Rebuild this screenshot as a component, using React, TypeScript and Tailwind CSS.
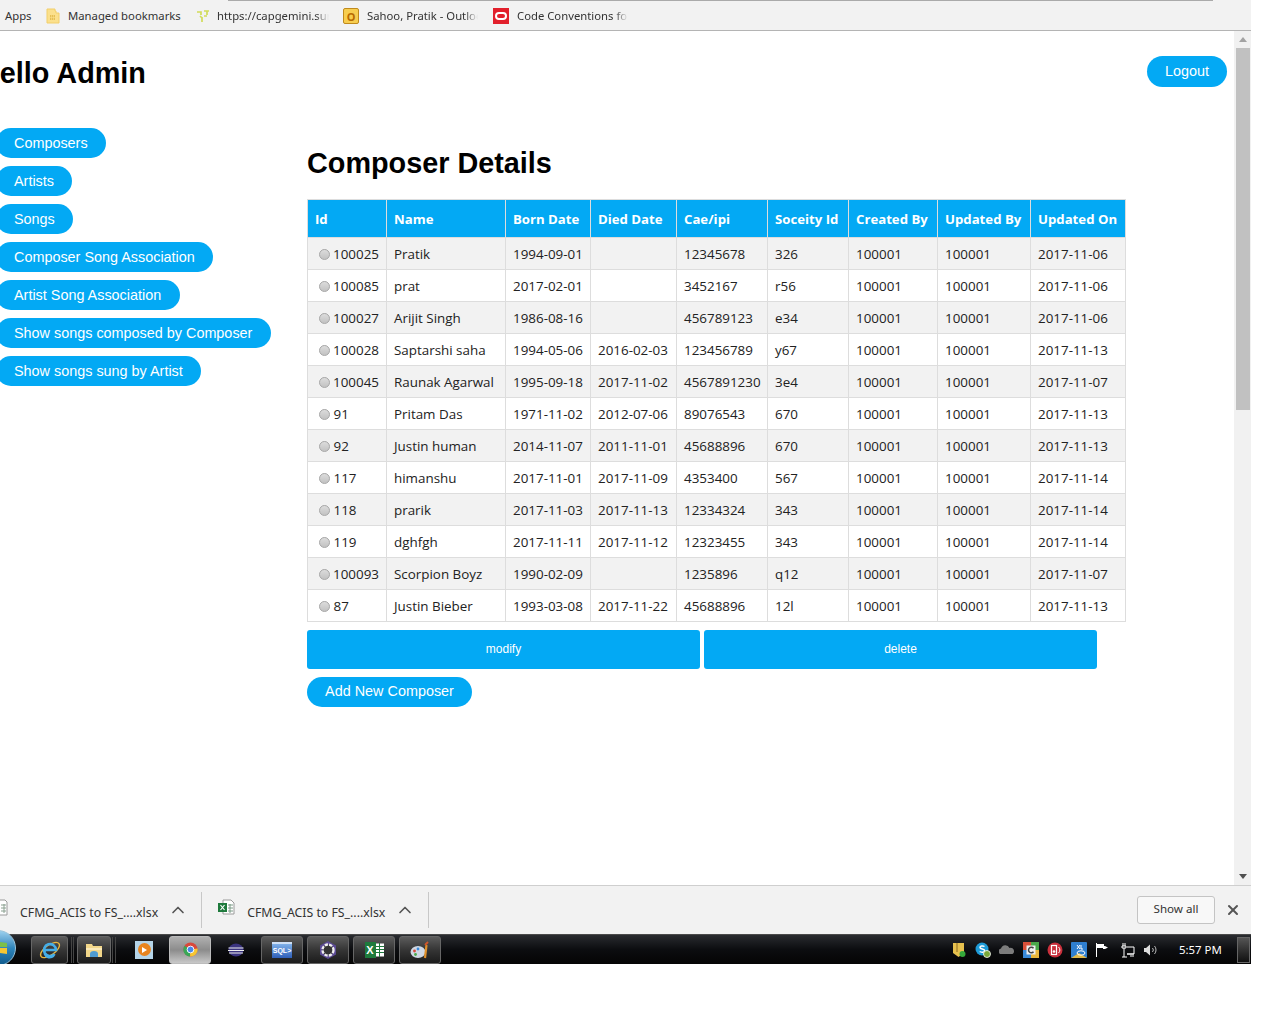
import type { ReactNode } from "react";
import { ChevronUp, X } from "lucide-react";

const composers = [
  ["100025", "Pratik", "1994-09-01", "", "12345678", "326", "100001", "100001", "2017-11-06"],
  ["100085", "prat", "2017-02-01", "", "3452167", "r56", "100001", "100001", "2017-11-06"],
  ["100027", "Arijit Singh", "1986-08-16", "", "456789123", "e34", "100001", "100001", "2017-11-06"],
  ["100028", "Saptarshi saha", "1994-05-06", "2016-02-03", "123456789", "y67", "100001", "100001", "2017-11-13"],
  ["100045", "Raunak Agarwal", "1995-09-18", "2017-11-02", "4567891230", "3e4", "100001", "100001", "2017-11-07"],
  ["91", "Pritam Das", "1971-11-02", "2012-07-06", "89076543", "670", "100001", "100001", "2017-11-13"],
  ["92", "Justin human", "2014-11-07", "2011-11-01", "45688896", "670", "100001", "100001", "2017-11-13"],
  ["117", "himanshu", "2017-11-01", "2017-11-09", "4353400", "567", "100001", "100001", "2017-11-14"],
  ["118", "prarik", "2017-11-03", "2017-11-13", "12334324", "343", "100001", "100001", "2017-11-14"],
  ["119", "dghfgh", "2017-11-11", "2017-11-12", "12323455", "343", "100001", "100001", "2017-11-14"],
  ["100093", "Scorpion Boyz", "1990-02-09", "", "1235896", "q12", "100001", "100001", "2017-11-07"],
  ["87", "Justin Bieber", "1993-03-08", "2017-11-22", "45688896", "12l", "100001", "100001", "2017-11-13"],
];

const headers = ["Id", "Name", "Born Date", "Died Date", "Cae/ipi", "Soceity Id", "Created By", "Updated By", "Updated On"];

const colWidths = ["w-[79px]", "w-[119px]", "w-[85px]", "w-[86px]", "w-[91px]", "w-[81px]", "w-[89px]", "w-[93px]", "w-[95px]"];

const navItems = [
  "Composers",
  "Artists",
  "Songs",
  "Composer Song Association",
  "Artist Song Association",
  "Show songs composed by Composer",
  "Show songs sung by Artist",
];

function ExcelIcon() {
  return (
    <svg width="17" height="17" viewBox="0 0 17 17">
      <path d="M5 1h8l3 3v11H5z" fill="#fff" stroke="#9a9a9a" />
      <path d="M10 6h5M10 9h5M10 12h5M12 5v9" stroke="#7a9a86" fill="none" />
      <rect x="0" y="4" width="9" height="9" fill="#1e7a3c" />
      <path d="M2.5 6l4 5M6.500 6l-4 5" stroke="#fff" strokeWidth="1.2" />
    </svg>
  );
}

function DownloadItem() {
  return (
    <>
      <span className="text-[12.3px] pt-[6px] text-[#333] whitespace-nowrap">CFMG_ACIS to FS_....xlsx</span>
      <ChevronUp className="w-5 h-5 ml-[10px] shrink-0 text-[#555]" />
      <span className="w-px h-9 ml-[13px] bg-[#c8c8c8] shrink-0" />
    </>
  );
}

function TaskButton({ children, className, active }: { children: ReactNode; className: string; active?: boolean }) {
  return (
    <div
      className={`h-[28px] rounded-[3px] border flex items-center justify-center shrink-0 ${className} ${
        active ? "border-[#bbb] bg-gradient-to-b from-[#b0b0b0] via-[#8c8c8c] to-[#c8c8c8]" : "border-[#666] bg-gradient-to-b from-[#5c5c5c] via-[#353535] to-[#1c1c1c]"
      }`}
    >
      {children}
    </div>
  );
}

function Bookmark({ label, width }: { label: string; width: string }) {
  return (
    <span className={`${width} shrink-0 overflow-hidden [mask-image:linear-gradient(to_right,black_88%,transparent)]`}>{label}</span>
  );
}

export default function App() {
  return (
    <div className="w-[1251px] font-['Liberation_Sans',sans-serif] bg-white overflow-hidden">
      {/* Bookmarks bar */}
      <div className="relative h-[31px] bg-[#f2f2f2] border-b border-[#b4b4b4] flex items-center pt-[2px] text-[11.3px] text-[#333] whitespace-nowrap font-['Noto_Sans',sans-serif] pl-[5px]">
        <div className="absolute top-0 left-[228px] w-[985px] h-px bg-[#aaa]" />
        <span className="w-[41px] shrink-0">Apps</span>
        <svg width="14" height="16" viewBox="0 0 14 16" className="mr-[8px] shrink-0">
          <path d="M1 1h8v2h1v2h3v10H1z" fill="#fbe08c" stroke="#f2cf6a" />
          <path d="M4 7h5v5H4z" fill="#e6bf55" />
          <path d="M5.500 7v5M7.500 7v5M4 9.500h5" stroke="#fbe08c" strokeWidth="0.6" />
        </svg>
        <span className="w-[128px] shrink-0">Managed bookmarks</span>
        <svg width="14" height="14" viewBox="0 0 14 14" className="mr-[7px] shrink-0">
          <path d="M1 3h4v3M8 2h5M11 2v4M8 7h3M6 8v5M4 7l2 2" stroke="#d2dc5a" strokeWidth="1.7" fill="none" />
        </svg>
        <Bookmark label="https://capgemini.sur" width="w-[112px] mr-[14px]" />
        <span className="w-[16px] h-[16px] mr-[8px] shrink-0 rounded-[2px] border border-[#c08a1c] bg-[#f7cd4f] flex items-center justify-center text-[11px] leading-none font-bold text-[#b86a00]">
          O
        </span>
        <Bookmark label="Sahoo, Pratik - Outlook" width="w-[111px] mr-[15px]" />
        <span className="w-[16px] h-[16px] mr-[8px] shrink-0 bg-[#e2202c] flex items-center justify-center">
          <span className="w-[12px] h-[8px] rounded-full border-2 border-white" />
        </span>
        <Bookmark label="Code Conventions for" width="w-[111px]" />
      </div>

      {/* Page with scrollbar */}
      <div className="flex h-[854px]">
        <div className="w-[1234px] overflow-hidden">
          <div className="flex justify-between items-start h-[97px] pt-[25px] pr-[7px]">
            <h1 className="text-[28.8px] leading-[34px] font-bold text-black -ml-[21px]">Hello Admin</h1>
            <button className="h-[31px] w-[80px] rounded-full bg-[#03a9f4] text-white text-[14.4px]">Logout</button>
          </div>
          <div className="flex">
            <nav className="w-[307px] shrink-0 flex flex-col items-start gap-2 -ml-[4px]">
              {navItems.map((item) => (
                <button
                  key={item}
                  className="h-[30px] pl-[18px] pr-[18.5px] pt-[2px] rounded-full bg-[#03a9f4] text-white text-[14.4px] whitespace-nowrap"
                >
                  {item}
                </button>
              ))}
            </nav>
            <main className="ml-[4px] pt-[16px]">
              <h2 className="text-[28.8px] leading-[38px] font-bold text-black mb-[17px]">Composer Details</h2>
              <table className="table-fixed border-collapse w-[819px] font-['Open_Sans',sans-serif] text-[13.4px]">
                <thead>
                  <tr className="h-[38px] bg-[#03a9f4] text-white text-[13.2px]">
                    {headers.map((h, i) => (
                      <th key={h} className={`${colWidths[i]} border border-[#dddddd] px-[7px] pt-[2px] text-left font-bold whitespace-nowrap`}>
                        {h}
                      </th>
                    ))}
                  </tr>
                </thead>
                <tbody>
                  {composers.map((row, r) => (
                    <tr key={row[0]} className={`h-[32px] ${r % 2 === 0 ? "bg-[#f2f2f2]" : "bg-white"} text-[#222]`}>
                      {row.map((cell, c) => (
                        <td key={c} className="border border-[#dddddd] px-[7px] pt-[2px] whitespace-nowrap overflow-hidden">
                          {c === 0 ? (
                            <span className="flex items-center pl-[4px] gap-[3.5px]">
                              <span className="w-[11px] h-[11px] rounded-full border border-[#a8a8a8] bg-gradient-to-b from-[#dcdcdc] to-[#c2c2c2]" />
                              {cell}
                            </span>
                          ) : (
                            cell
                          )}
                        </td>
                      ))}
                    </tr>
                  ))}
                </tbody>
              </table>
              <div className="flex gap-1 mt-2 mb-2">
                <button className="w-[393px] h-[39px] pb-[2px] rounded-[3px] bg-[#03a9f4] text-white text-xs">modify</button>
                <button className="w-[393px] h-[39px] pb-[2px] rounded-[3px] bg-[#03a9f4] text-white text-xs">delete</button>
              </div>
              <button className="w-[165px] h-[30px] rounded-full bg-[#03a9f4] text-white text-[14.4px]">Add New Composer</button>
            </main>
          </div>
        </div>
        {/* Scrollbar */}
        <div className="w-[17px] bg-[#f1f1f1] flex flex-col">
          <div className="h-[17px] flex items-center justify-center">
            <span className="border-x-4 border-x-transparent border-b-[5px] border-b-[#a3a3a3]" />
          </div>
          <div className="w-[14px] ml-[2px] h-[362px] bg-[#c1c1c1]" />
          <div className="mt-auto h-[17px] flex items-center justify-center">
            <span className="border-x-4 border-x-transparent border-t-[5px] border-t-[#505050]" />
          </div>
        </div>
      </div>

      {/* Downloads bar */}
      <div className="h-[49px] bg-[#f2f2f2] border-t border-[#cfcfcf] flex items-center font-['Noto_Sans',sans-serif]">
        <svg width="8" height="17" viewBox="0 0 8 17" className="mr-[12px] shrink-0 -mt-[5px]">
          <path d="M-3 1h8l2 2v13H-3z" fill="#fff" stroke="#9a9a9a" />
          <path d="M1 6h5M1 9h5M1 12h5M4 5v9" stroke="#8aa090" fill="none" />
        </svg>
        <DownloadItem />
        <span className="ml-[16px] mr-[12px] shrink-0 -mt-[5px]">
          <ExcelIcon />
        </span>
        <DownloadItem />
        <button className="ml-auto w-[78px] h-[28px] pb-[2px] rounded-[3px] bg-[#f8f8f8] border border-[#c4c4c4] text-[11.6px] text-[#333]">Show all</button>
        <X className="w-4 h-4 mx-[10px] text-[#555]" strokeWidth={3} />
      </div>

      {/* Taskbar */}
      <div className="relative h-[30px] bg-gradient-to-b from-[#2a2c30] via-[#0c0d10] to-[#050505] border-t border-[#4a4a4a] flex items-center text-white pl-[31px]">
        {/* Start orb hangs over the bar above it */}
        <div className="absolute -left-[20px] -top-[5px] w-[36px] h-[36px] rounded-full border border-[#9cc4da] bg-gradient-to-b from-[#9ad0ee] via-[#2f86bc] to-[#0f5a8c] flex items-center justify-end pr-[8px]">
          <svg width="14" height="18" viewBox="0 0 14 18">
            <path d="M0 2l6 1v5H0z" fill="#e8583a" />
            <path d="M7 3l7 1v4H7z" fill="#7cc04a" />
            <path d="M0 9h6v5l-6-1z" fill="#4a9ee0" />
            <path d="M7 9h7v6l-7-1z" fill="#f6c632" />
          </svg>
        </div>
        <TaskButton className="w-[37px]">
          <svg width="24" height="22" viewBox="0 0 24 22">
            <ellipse cx="12" cy="11" rx="11" ry="5" fill="none" stroke="#e8b63c" strokeWidth="1.3" transform="rotate(-35 12 11)" />
            <path d="M6 11h12a6 6 0 1 0-1.600 4.200M7 11a5 5 0 0 0 9.400 4" fill="none" stroke="#45aee8" strokeWidth="2.6" />
          </svg>
        </TaskButton>
        <span className="w-[3px] h-[26px] mx-[3px] border-x border-[#444] shrink-0" />
        <TaskButton className="w-[34px]">
          <svg width="18" height="16" viewBox="0 0 18 16">
            <path d="M1 2h6l1 2h9v11H1z" fill="#f2d78a" />
            <path d="M1 6h16v2H1z" fill="#fbeab8" />
            <path d="M5 15v-3a4 3 0 0 1 8 0v3z" fill="#4f9bd0" />
          </svg>
        </TaskButton>
        <span className="w-[4px] h-[26px] mx-px border-x border-[#444] shrink-0" />
        <span className="w-[18px] h-[18px] ml-[18px] mr-[16px] bg-[#b5d4e8] flex items-center justify-center shrink-0">
          <span className="w-[13px] h-[13px] rounded-full bg-[#e8841f] flex items-center justify-center pl-px">
            <span className="border-y-[3.5px] border-y-transparent border-l-[5px] border-l-white" />
          </span>
        </span>
        <TaskButton className="w-[42px]" active>
          <svg width="15" height="15" viewBox="0 0 16 16">
            <circle cx="8" cy="8" r="7.500" fill="#d9483b" />
            <path d="M8 8L1.500 4a7.500 7.500 0 0 0 6 11.500z" fill="#3aa757" />
            <path d="M8 8l7.500-1a7.500 7.500 0 0 1-8 8.500z" fill="#f6c632" />
            <circle cx="8" cy="8" r="3.600" fill="#4a86e8" stroke="#fff" />
          </svg>
        </TaskButton>
        <svg width="16" height="14" viewBox="0 0 16 14" className="ml-[17px] mr-[17px] shrink-0">
          <ellipse cx="8" cy="7" rx="7.500" ry="6.500" fill="#3b3480" />
          <path d="M0.500 5h15M0 7.500h16M1 10h14" stroke="#eee" strokeWidth="1.2" />
        </svg>
        <div className="flex items-center gap-[4px]">
          <TaskButton className="w-[42px]">
            <span className="w-[20px] h-[16px] bg-gradient-to-b from-[#7fb0e8] to-[#2f5fb8] border-t-2 border-[#cfe0f5] text-[7px] font-bold leading-[13px] text-center">
              SQL&gt;
            </span>
          </TaskButton>
          <TaskButton className="w-[42px]">
            <svg width="18" height="18" viewBox="0 0 18 18">
              <path d="M9 0l8 4.500v9L9 18l-8-4.500v-9z" fill="#5b4a94" />
              <circle cx="9" cy="9" r="5.500" fill="#333" stroke="#eee" strokeWidth="2.4" strokeDasharray="3.2 1.2" />
            </svg>
          </TaskButton>
          <TaskButton className="w-[42px]">
            <span className="flex items-center">
              <span className="w-[11px] h-[16px] bg-[#1e7a3c] text-[11px] font-bold leading-[16px] text-center">X</span>
              <svg width="8" height="14" viewBox="0 0 8 14">
                <path d="M0 .5h8v13H0z" fill="#fff" />
                <path d="M0 3.500h8M0 6.500h8M0 9.500h8M3.500 0v14" stroke="#1e7a3c" />
              </svg>
            </span>
          </TaskButton>
          <TaskButton className="w-[42px]">
            <svg width="20" height="18" viewBox="0 0 20 18">
              <ellipse cx="8" cy="11" rx="7.500" ry="6" fill="#cfd8e4" />
              <circle cx="4.500" cy="10" r="1.400" fill="#d94a3a" />
              <circle cx="8" cy="8" r="1.400" fill="#3a8ad9" />
              <circle cx="5.500" cy="13.500" r="1.400" fill="#4aa84a" />
              <path d="M15 17l1.500-13" stroke="#e0902a" strokeWidth="2.2" />
              <path d="M15 4l3-3" stroke="#d0562a" strokeWidth="2" />
            </svg>
          </TaskButton>
        </div>

        {/* Tray */}
        <div className="ml-auto flex items-center gap-2 shrink-0">
          <svg width="16" height="16" viewBox="0 0 16 16">
            <path d="M2 1h11v10l-5.500 4L2 11z" fill="#e6c04e" />
            <path d="M6 1v9" stroke="#8c6a20" />
            <circle cx="11.500" cy="12" r="3" fill="#35a83a" />
          </svg>
          <svg width="16" height="16" viewBox="0 0 16 16">
            <circle cx="7" cy="7" r="6.500" fill="#1d9bd8" />
            <path d="M9.500 4.500C8 3.500 4.800 3.800 5 5.600c.2 1.800 4.600 1 4.700 3 .1 1.800-3.400 2-5 .9" fill="none" stroke="#fff" strokeWidth="1.500" />
            <circle cx="12" cy="12" r="3.500" fill="#7aa83a" stroke="#fff" strokeWidth="0.8" />
          </svg>
          <svg width="16" height="16" viewBox="0 0 16 16">
            <path d="M1 12a3 3 0 0 1 1-5.500A4.500 4.500 0 0 1 10.500 6 3.300 3.300 0 0 1 15 9a3 3 0 0 1-1.500 3z" fill="#7c7c7c" />
          </svg>
          <svg width="16" height="16" viewBox="0 0 16 16">
            <path d="M0 0h8v8H0z" fill="#d9503a" />
            <path d="M8 0h8v8H8z" fill="#4aa84a" />
            <path d="M0 8h8v8H0z" fill="#3a8ad9" />
            <path d="M8 8h8v8H8z" fill="#e8b63c" />
            <rect x="3.500" y="3.500" width="9" height="9" fill="#eee" />
            <path d="M10.500 6.200a2.800 2.800 0 1 0 0 3.600" fill="none" stroke="#444" strokeWidth="1.500" />
          </svg>
          <svg width="16" height="16" viewBox="0 0 16 16">
            <circle cx="8" cy="8" r="7.500" fill="#c9303c" />
            <rect x="4.500" y="3.500" width="5" height="9" fill="none" stroke="#fff" strokeWidth="1.200" />
            <circle cx="7" cy="9.500" r="1.300" fill="#fff" />
            <path d="M11.500 5a4 4 0 0 1 0 6" fill="none" stroke="#fff" />
          </svg>
          <svg width="16" height="16" viewBox="0 0 16 16">
            <rect width="16" height="16" rx="1" fill="#2f7fd0" />
            <path d="M0 16l8-5 8 5z" fill="#e0b84a" />
            <path d="M6 3l3 4M9 3L6 7M10 3v4h2" stroke="#fff" fill="none" />
            <ellipse cx="10" cy="11" rx="4" ry="2.200" fill="none" stroke="#fff" />
          </svg>
          <svg width="16" height="16" viewBox="0 0 16 16">
            <path d="M1.500 1v14" stroke="#fff" />
            <path d="M2 2h7v2h1l3 1.500L10 7H8V6H2z" fill="#fff" />
          </svg>
          <svg width="16" height="16" viewBox="0 0 16 16">
            <path d="M4 1v3M6 1v3M3 4h4v2H3zM5 6v9M3 15h5M8 5h7v7H8M8 12h7M11 14h4" stroke="#fff" fill="none" />
          </svg>
          <svg width="16" height="16" viewBox="0 0 16 16">
            <path d="M1 6h2l4-3.500v11L3 10H1z" fill="#ddd" />
            <path d="M9.500 6a3 3 0 0 1 0 4M11.500 4a6 6 0 0 1 0 8" fill="none" stroke="#bbb" />
          </svg>
        </div>
        <span className="ml-5 w-[43px] shrink-0 text-[11.4px] font-['Noto_Sans',sans-serif] whitespace-nowrap">5:57 PM</span>
        <span className="ml-[15px] mr-px w-[13px] h-[26px] shrink-0 border border-[#666] bg-gradient-to-b from-[#555] to-[#111]" />
      </div>
    </div>
  );
}
